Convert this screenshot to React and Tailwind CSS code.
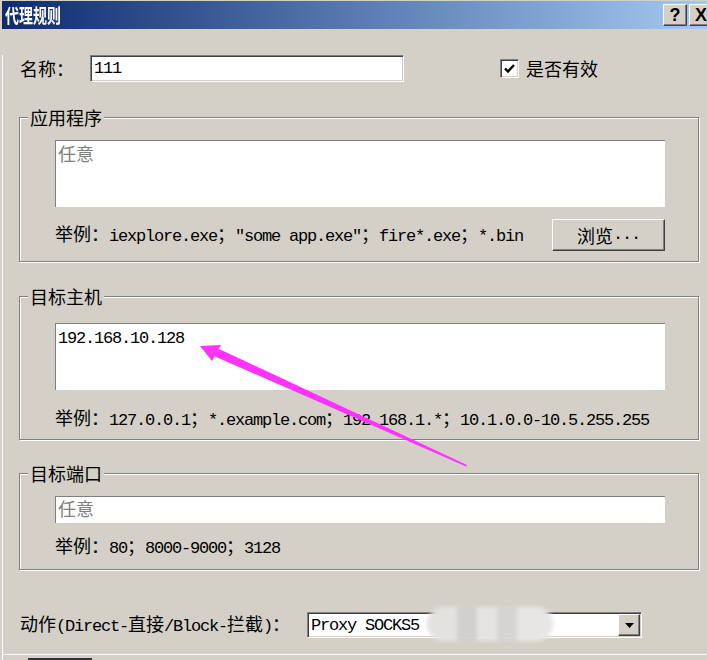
import React from "react";

const CJK_RE = /([\u2E80-\u9FFF\u3000-\u303F\uFF00-\uFFEF]+)/;

function T({ s }) {
  const parts = s.split(CJK_RE).filter((p) => p.length > 0);
  return (
    <>
      {parts.map((p, i) =>
        CJK_RE.test(p) ? (
          <span key={i} className="font-['Noto_Sans_CJK_SC',sans-serif] text-[18px] tracking-normal">
            {p}
          </span>
        ) : (
          <span key={i} className="font-['Liberation_Mono',monospace] text-[17px] tracking-[-1.2px] whitespace-pre">
            {p}
          </span>
        )
      )}
    </>
  );
}

function GroupBox({ title, className, children }) {
  return (
    <div
      className={
        "relative w-[680px] border border-[#808080] shadow-[1px_1px_0_#ffffff,inset_1px_1px_0_#ffffff] " +
        className
      }
    >
      <div className="absolute left-[8px] top-[-11px] bg-[#d4d0c8] px-[2px] leading-[20px] text-black">
        <T s={title} />
      </div>
      {children}
    </div>
  );
}

export default function App() {
  return (
    <div className="relative w-[707px] h-[660px] overflow-hidden bg-[#d4d0c8] pl-[2px] pt-[1px] text-black leading-[20px]">
      {/* Title bar */}
      <div className="flex h-[28px] w-[720px] items-center bg-gradient-to-r from-[#0f2b6e] via-[#5a7cb2] to-[#a8cdf2]">
        <div className="w-[661px] pl-[3px]">
          <span className="inline-block origin-center scale-y-[1.4] font-['Noto_Sans_CJK_SC',sans-serif] text-[14px] font-bold text-white">
            代理规则
          </span>
        </div>
        <div className="flex gap-[2px]">
          <div className="flex h-[22px] w-[24px] items-center justify-center border border-t-white border-l-white border-b-[#404040] border-r-[#404040] bg-[#d4d0c8] shadow-[inset_-1px_-1px_0_#808080] font-['Liberation_Sans',sans-serif] text-[18px] font-bold leading-none text-black">
            ?
          </div>
          <div className="flex h-[22px] w-[24px] items-center justify-center border border-t-white border-l-white border-b-[#404040] border-r-[#404040] bg-[#d4d0c8] shadow-[inset_-1px_-1px_0_#808080] font-['Liberation_Sans',sans-serif] text-[18px] font-bold leading-none text-black">
            X
          </div>
        </div>
      </div>

      {/* Body */}
      <div className="h-[640px] border-l border-white pl-[16px]">
        {/* Name row */}
        <div className="mt-[26px] flex h-[27px] items-center pl-[1px]">
          <div className="w-[70px]">
            <T s="名称：" />
          </div>
          <div className="flex h-[27px] w-[314px] items-center border border-t-[#808080] border-l-[#808080] border-b-white border-r-white bg-white pl-[3px] shadow-[inset_1px_1px_0_#404040,inset_-1px_-1px_0_#d4d0c8]">
            <T s="111" />
          </div>
          <div className="ml-[96px] flex h-[19px] w-[19px] items-center justify-center border border-t-[#808080] border-l-[#808080] border-b-white border-r-white bg-white shadow-[inset_1px_1px_0_#404040,inset_-1px_-1px_0_#d4d0c8]">
            <svg width="13" height="13" viewBox="0 0 13 13">
              <path d="M2 6.5 L5 9.5 L11 3" fill="none" stroke="#000" strokeWidth="2.4" />
            </svg>
          </div>
          <div className="ml-[7px]">
            <T s="是否有效" />
          </div>
        </div>

        {/* 应用程序 */}
        <GroupBox title="应用程序" className="mt-[35px] h-[145px] pl-[35px] pt-[22px]">
          <div className="h-[67px] w-[610px] border-t border-l border-[#808080] bg-white pl-[2px] pt-[2px] text-[#808080]">
            <T s="任意" />
          </div>
          <div className="mt-[12px] flex h-[32px] w-[610px] items-center justify-between">
            <div>
              <T s={'举例：iexplore.exe；"some app.exe"；fire*.exe；*.bin'} />
            </div>
            <div className="flex h-[32px] w-[113px] items-center justify-center border border-t-white border-l-white border-b-[#404040] border-r-[#404040] shadow-[inset_-1px_-1px_0_#808080]">
              <T s="浏览..." />
            </div>
          </div>
        </GroupBox>

        {/* 目标主机 */}
        <GroupBox title="目标主机" className="mt-[34px] h-[144px] pl-[35px] pt-[26px]">
          <div className="h-[67px] w-[610px] border-t border-l border-[#808080] bg-white pl-[2px] pt-[3px]">
            <T s="192.168.10.128" />
          </div>
          <div className="mt-[17px] h-[20px]">
            <T s="举例：127.0.0.1；*.example.com；192.168.1.*；10.1.0.0-10.5.255.255" />
          </div>
        </GroupBox>

        {/* 目标端口 */}
        <GroupBox title="目标端口" className="mt-[33px] h-[97px] pl-[35px] pt-[22px]">
          <div className="h-[27px] w-[610px] border-t border-l border-[#808080] bg-white pl-[2px] pt-[1px] text-[#808080]">
            <T s="任意" />
          </div>
          <div className="mt-[12px] h-[20px]">
            <T s="举例：80；8000-9000；3128" />
          </div>
        </GroupBox>

        {/* Action row */}
        <div className="mt-[42px] flex h-[26px] items-center pl-[1px]">
          <div className="w-[287px]">
            <T s="动作(Direct-直接/Block-拦截)：" />
          </div>
          <div className="relative flex h-[26px] w-[335px] items-center border border-t-[#808080] border-l-[#808080] border-b-white border-r-white bg-white shadow-[inset_1px_1px_0_#404040,inset_-1px_-1px_0_#d4d0c8]">
            <div className="flex-1 pl-[3px]">
              <T s="Proxy SOCKS5" />
            </div>
            <div className="mr-[1px] flex h-[22px] w-[22px] items-center justify-center border border-t-white border-l-white border-b-[#404040] border-r-[#404040] bg-[#d4d0c8] shadow-[inset_-1px_-1px_0_#808080]">
              <svg width="9" height="5" viewBox="0 0 9 5">
                <path d="M0 0 H9 L4.5 5 Z" fill="#000" />
              </svg>
            </div>
            {/* redaction blur */}
            <div className="absolute left-[119px] top-[-6px] h-[34px] w-[126px] rounded-[17px] bg-[#dcdad8] blur-[2px]">
              <div className="flex h-full w-full items-center justify-center gap-0 overflow-hidden rounded-[17px]">
                <div className="h-full w-[30px] bg-[#e4e2e0]" />
                <div className="h-full w-[20px] bg-[#d2d0ce]" />
                <div className="h-full w-[20px] bg-[#e6e4e2]" />
                <div className="h-full w-[20px] bg-[#d6d4d2]" />
                <div className="h-full w-[36px] bg-[#e8e6e4]" />
              </div>
            </div>
          </div>
        </div>

        {/* separator + bottom button edge */}
        <div className="ml-[-17px] mt-[16px] h-[1px] w-[720px] bg-white" />
        <div className="ml-[9px] mt-[3px] h-[10px] w-[64px] border-t-2 border-l border-[#303030]" />
      </div>

      {/* Magenta arrow */}
      <svg className="pointer-events-none absolute left-0 top-0" width="707" height="660" viewBox="0 0 707 660">
        <polygon points="200,346 212,361 221,345" fill="#ff33ff" />
        <polygon points="219,349 214,356 466,466.5 467,465" fill="#ff33ff" />
      </svg>
    </div>
  );
}
